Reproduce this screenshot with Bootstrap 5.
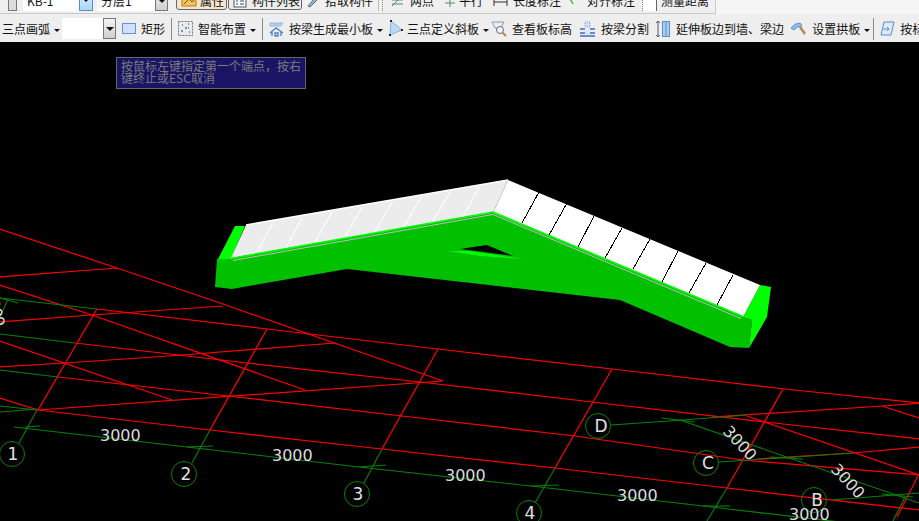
<!DOCTYPE html>
<html lang="en">
<head>
  <meta charset="UTF-8" />
  <meta name="viewport" content="width=device-width, initial-scale=1.0"/>
  <title>Slab Editor</title>
  <link href="https://cdn.jsdelivr.net/npm/bootstrap@5.3.0/dist/css/bootstrap.min.css" rel="stylesheet" />
  <style>
    html, body { height: 100%; overflow: hidden; background: #000; }
    body { font: 12px/1 "Noto Sans CJK SC", "Liberation Sans", sans-serif; color: #111; }
    .bar-wrap { background: #f5f5f5; }
    .bar-top { height: 14px; width: 716px; overflow: hidden; background: #f0f0f0; border-right: 1px solid #c8c8c8; border-bottom: 1px solid #c8c8c8; padding: 0 0 2px 8px; }
    .bar-main { height: 28px; background: #eee; white-space: nowrap; overflow: hidden; padding: 1px 0 0 2px; }
    .tool { margin-left: 7px; gap: 5px; flex: none; }
    .tool svg { flex: none; }
    .bar-top .tool { height: 18px; margin-bottom: 1px; }
    .m0 { margin-left: 0; }
    .m2 { margin-left: 2px; }
    .m5 { margin-left: 5px; }
    .m6 { margin-left: 6px; }
    .m9 { margin-left: 9px; }
    .m10 { margin-left: 10px; }
    .g2 { gap: 2px; }
    .g4 { gap: 4px; }
    .sep { width: 1px; height: 22px; background: #8a8a8a; margin-left: 6px; flex: none; }
    .sep-end { margin-left: 3px; }
    .edge-top { width: 1px; height: 20px; background: #bbb; margin-left: 5px; flex: none; }
    .sep-top { width: 1px; height: 20px; border-left: 1px dotted #888; margin-left: 3px; flex: none; }
    .sep-gap { margin-left: 7px; }
    .blank-top { width: 14px; height: 20px; background: #fff; border-right: 1px solid #666; flex: none; }
    .text-top { margin-left: 4px; height: 18px; margin-bottom: 1px; flex: none; }
    .combo-input { background: #fff; width: 41px; height: 21px; margin-left: 2px; flex: none; }
    .combo-btn { width: 13px; height: 21px; background: linear-gradient(#f4f4f4, #cfcfcf); border: 1px solid #777; flex: none; }
    .combo-btn::after, .combo-blue::after { content: ""; border-top: 4px solid #111; border-left: 4px solid transparent; border-right: 4px solid transparent; }
    .combo-blue { width: 14px; height: 22px; background: linear-gradient(#e0f0fc, #a8d8f8); border: 1px solid #5a8fb8; flex: none; }
    .top-input { background: #fff; height: 20px; padding-left: 4px; flex: none; }
    .top-name { width: 56px; margin-left: 6px; }
    .top-floor { width: 58px; margin-left: 4px; }
    .mini-btn { width: 9px; height: 20px; background: #ddd; border: 1px solid #777; flex: none; }
    .press { height: 18px; margin-bottom: 1px; border: 1px solid #666; border-radius: 3px; background: #ededed; padding: 0 2px 0 4px; gap: 3px; flex: none; }
    .press-on { margin-left: 8px; background: #f4e6cc; }
    .press-list { margin-left: 1px; gap: 5px; padding-right: 1px; }
    .dropdown-toggle::after { margin-left: 4px; vertical-align: 2px; }
    .stage { height: 479px; background: #000; }
    .stage svg { display: block; }
    .hint { top: 15px; left: 116px; width: 190px; height: 32px; background: #1a1464; border: 1px solid #666; color: #7c7c7c; padding: 2px 4px; line-height: 12px; }
    .dim { font: 16px "DejaVu Sans", sans-serif; fill: #dcdcdc; }
    .axis { font: 17px "DejaVu Sans", sans-serif; fill: #e0e0e0; text-anchor: middle; }
    .red polyline, .grn polyline, .grn line { fill: none; }
    .red { stroke: #f00; stroke-width: 1.25; }
    .grn { stroke: #0a800a; stroke-width: 1.1; }
    .bub { fill: none; stroke: #0a800a; }
  </style>
</head>
<body>

  <div class="bar-wrap">
    <div class="bar-top d-flex align-items-end">
      <div class="mini-btn"></div>
      <div class="top-input top-name d-flex align-items-center">KB-1</div><div class="combo-blue d-flex align-items-center justify-content-center"></div>
      <div class="top-input top-floor d-flex align-items-center">分层1</div><div class="combo-btn d-flex align-items-center justify-content-center"></div>
      <div class="press press-on d-flex align-items-center">
        <svg width="16" height="14" viewBox="0 0 16 14"><rect x="1" y="2" width="14" height="10" fill="#f6c25a" stroke="#b07a20"/><path d="M3 10 8 5l3 3 3-3" fill="none" stroke="#7a4a10"/></svg>属性
      </div>
      <div class="press press-list d-flex align-items-center">
        <svg width="14" height="14" viewBox="0 0 14 14"><rect x="1" y="1" width="12" height="12" fill="#fff" stroke="#456"/><path d="M3 4h2M7 4h4M3 7h2M7 7h4M3 10h2M7 10h4" stroke="#345"/></svg>构件列表
      </div>
      <div class="tool m5 g4 d-flex align-items-center">
        <svg width="14" height="14" viewBox="0 0 14 14"><path d="M1 12 8 4l2 2-7 7z" fill="#9db8e0" stroke="#567"/></svg>拾取构件
      </div>
      <div class="edge-top"></div>
      <div class="sep-top"></div>
      <div class="tool d-flex align-items-center">
        <svg width="15" height="14" viewBox="0 0 15 14"><path d="M2 12 12 2M2 6h11M2 10h11" stroke="#586" fill="none"/></svg>两点
      </div>
      <div class="tool m9 g2 d-flex align-items-center">
        <svg width="14" height="14" viewBox="0 0 14 14"><path d="M2 5h10M2 9h10M7 1v12" stroke="#586" fill="none"/></svg>平行
      </div>
      <div class="tool m10 d-flex align-items-center">
        <svg width="15" height="14" viewBox="0 0 15 14"><path d="M1 3v9M14 3v9M1 8h13" stroke="#333" fill="none"/></svg>长度标注
      </div>
      <div class="tool d-flex align-items-center">
        <svg width="14" height="14" viewBox="0 0 14 14"><path d="M1 3l4 7" stroke="#4a4" stroke-width="1.4" fill="none"/></svg>对齐标注
      </div>
      <div class="sep-top sep-gap"></div>
      <div class="blank-top"></div>
      <div class="text-top d-flex align-items-center">测量距离</div>
    </div>

    <div class="bar-main d-flex align-items-center">
      <div class="tool m0 d-flex align-items-center"><span class="dropdown-toggle">三点画弧</span></div>
      <div class="combo-input"></div>
      <div class="combo-btn d-flex align-items-center justify-content-center"></div>

      <div class="tool m6 d-flex align-items-center">
        <svg width="14" height="11" viewBox="0 0 14 11"><rect x=".5" y=".5" width="13" height="10" fill="#cfe0fa" stroke="#6f8fd0"/></svg>矩形
      </div>
      <div class="sep"></div>
      <div class="tool m6 d-flex align-items-center">
        <svg width="15" height="15" viewBox="0 0 15 15"><rect x=".5" y=".5" width="14" height="14" fill="#e6ebf2" stroke="#777" stroke-dasharray="2 1"/><path d="M4 4h1M10 3h1M7 7h2M3 10h2M11 11h1M10 7h1" stroke="#234"/></svg><span class="dropdown-toggle">智能布置</span>
      </div>
      <div class="sep"></div>
      <div class="tool m6 d-flex align-items-center">
        <svg width="15" height="16" viewBox="0 0 15 16"><path d="M1 2h7l-2 3H1zM9 2h5l-2 3H7z" fill="#bcd4f2" stroke="#9ab6de"/><path d="M1 12 7 7l7 5M3 11v4M12 11v4M6 15h3v-3H6z" fill="none" stroke="#4f83c9" stroke-width="1.4"/></svg><span class="dropdown-toggle">按梁生成最小板</span>
      </div>
      <div class="tool m6 g4 d-flex align-items-center">
        <svg width="14" height="17" viewBox="0 0 14 17"><path d="M2 1 13 10 1 15z" fill="#bcd8f4" stroke="#8cb4de"/><path d="M1 0h2v2H1zM12 9h2v2h-2zM0 14h2v2H0z" fill="#222"/></svg><span class="dropdown-toggle">三点定义斜板</span>
      </div>
      <div class="tool m2 d-flex align-items-center">
        <svg width="16" height="16" viewBox="0 0 16 16"><path d="M1 1h12l-3 6H4z" fill="#e8edf2" stroke="#8a9aaa"/><circle cx="9" cy="9" r="3.5" fill="#f4f8fc" stroke="#667"/><path d="M11.5 11.5 15 15" stroke="#b08a4a" stroke-width="2"/></svg>查看板标高
      </div>
      <div class="tool d-flex align-items-center">
        <svg width="17" height="16" viewBox="0 0 17 16"><rect x="6" y="1" width="5" height="5" fill="#cfe0f8" stroke="#7d9ed8" stroke-dasharray="1 1"/><path d="M1 8h5M11 8h5M1 12h5M11 12h5M1 15h15" stroke="#3f6cc0" stroke-width="1.3"/><rect x="6" y="9" width="5" height="5" fill="#dbe8fa"/></svg>按梁分割
      </div>
      <div class="tool d-flex align-items-center">
        <svg width="15" height="18" viewBox="0 0 15 18"><path d="M2 1v16M0 3l2-2 2 2M0 15l2 2 2-2" fill="none" stroke="#557"/><rect x="6.5" y="1.5" width="7" height="15" fill="#a9cdf2" stroke="#5d8fc8"/><path d="M10 2v14" stroke="#5d8fc8"/></svg>延伸板边到墙、梁边
      </div>
      <div class="tool d-flex align-items-center">
        <svg width="16" height="14" viewBox="0 0 16 14"><path d="M0 6Q4 1 9 1l2 3Q6 4 3 8z" fill="#8fc0ee" stroke="#5d8fc8"/><path d="M9 5l5 7" stroke="#b08a4a" stroke-width="2.4"/></svg><span class="dropdown-toggle">设置拱板</span>
      </div>
      <div class="sep sep-end"></div>
      <div class="tool m6 d-flex align-items-center">
        <svg width="15" height="15" viewBox="0 0 15 15"><path d="M4 1h10l-3 13H1z" fill="#dbe9fa" stroke="#5d8fc8"/><path d="M3 8h6l-2-2M9 8 7 10" fill="none" stroke="#5d8fc8"/></svg>按标高
      </div>
    </div>
  </div>

  <div class="stage position-relative overflow-hidden">
    <svg id="scene" width="919" height="479" viewBox="0 42 919 479">
      <g class="red">
        <polyline points="0,229 117,268 223,304 443,381 38,410"/>
        <polyline points="0,277 117,268"/>
        <polyline points="0,322 92,315 223,306"/>
        <polyline points="0,367 65,363 183,355 335,343"/>
        <polyline points="0,285 92,315 305,390"/>
        <polyline points="0,341 172,400"/>
        <polyline points="0,398 38,410"/>
        <polyline points="97,309 267,329 438,349 612,369 785,389 919,403"/>
        <polyline points="75,343 247,363 420,382 592,402 765,422 919,439"/>
        <polyline points="58,377 228,396 402,416 575,436 743,460 919,475"/>
        <polyline points="38,410 210,430 382,449 555,468 727,488 919,510"/>
        <polyline points="97,309 38,410"/>
        <polyline points="267,329 210,430"/>
        <polyline points="438,349 382,449"/>
        <polyline points="612,369 555,468"/>
        <polyline points="783,389 727,488"/>
        <polyline points="919,474 897,517"/>
        <polyline points="712,417 883,406 919,403"/>
        <polyline points="757,459 853,453 919,447"/>
        <polyline points="747,416 919,475"/>
        <polyline points="882,406 919,418"/>
      </g>
      <g class="grn">
        <polyline points="14,427 187,447 359,467 531,486 703,506 857,524"/>
        <line x1="25" y1="427" x2="40" y2="426"/>
        <line x1="187" y1="447" x2="213" y2="446"/>
        <line x1="359" y1="467" x2="386" y2="465"/>
        <line x1="531" y1="486" x2="559" y2="485"/>
        <line x1="703" y1="506" x2="730" y2="506"/>
        <line x1="19" y1="443" x2="37" y2="410"/>
        <line x1="192" y1="463" x2="210" y2="430"/>
        <line x1="364" y1="483" x2="382" y2="449"/>
        <line x1="535" y1="503" x2="555" y2="468"/>
        <line x1="707" y1="521" x2="727" y2="488"/>
        <line x1="893" y1="521" x2="905" y2="497"/>
        <line x1="0" y1="298" x2="97" y2="309"/>
        <line x1="0" y1="334" x2="75" y2="343"/>
        <line x1="0" y1="370" x2="58" y2="377"/>
        <line x1="0" y1="406" x2="37" y2="410"/>
        <line x1="0" y1="412" x2="37" y2="409"/>
        <line x1="8" y1="299" x2="0" y2="317"/>
        <line x1="0" y1="298" x2="18" y2="303"/>
        <polyline points="611,425 683,420 747,415"/>
        <line x1="662" y1="418" x2="695" y2="422"/>
        <line x1="680" y1="420" x2="919" y2="503"/>
        <polyline points="719,462 780,458 853,453"/>
        <line x1="770" y1="457" x2="803" y2="459"/>
        <line x1="882" y1="494" x2="913" y2="497"/>
        <line x1="832" y1="500" x2="919" y2="493"/>
      </g>

      <polygon fill="#00c000" points="217,259 215,287 232,289 243,287 347,269 480,284 620,300 730,347 749,348 752,320 743,317 493,213 231,258"/>
      <polygon fill="#000" points="460,249 487,245 513,256"/>
      <polygon fill="#00ff00" points="448,251 470,251 523,259 480,256"/>
      <polygon fill="#00ff00" points="218,259 235,226 245,226 231,259"/>
      <polygon fill="#00ff00" points="760,285 771,287 767,317 749,348 752,320 743,317"/>
      <polygon fill="#ececec" points="231,258 246,225 508,180 493,213"/>
      <polygon fill="#fff" points="508,180 760,285 743,317 493,213"/>
      <polyline points="246,225 508,180" fill="none" stroke="#fff" stroke-width="1.5"/>
      <polyline points="233,260.5 493,214.5 741,318.5" fill="none" stroke="#bdbdbd"/>
      <polyline points="231,258.5 493,212 743,316.5" fill="none" stroke="#0f0" stroke-width="1.6"/>
      <g stroke="#fff" shape-rendering="crispEdges">
        <line x1="273" y1="223" x2="257" y2="252"/>
        <line x1="302" y1="218" x2="286" y2="248"/>
        <line x1="332" y1="212" x2="315" y2="242"/>
        <line x1="362" y1="207" x2="345" y2="237"/>
        <line x1="392" y1="202" x2="375" y2="232"/>
        <line x1="421" y1="197" x2="404" y2="227"/>
        <line x1="450" y1="192" x2="433" y2="221"/>
        <line x1="479" y1="187" x2="463" y2="217"/>
      </g>
      <g stroke="#000" shape-rendering="crispEdges">
        <line x1="539" y1="192" x2="522" y2="223"/>
        <line x1="567" y1="203" x2="549" y2="235"/>
        <line x1="594" y1="216" x2="578" y2="247"/>
        <line x1="622" y1="228" x2="605" y2="258"/>
        <line x1="650" y1="239" x2="633" y2="269"/>
        <line x1="678" y1="251" x2="662" y2="282"/>
        <line x1="706" y1="263" x2="689" y2="293"/>
        <line x1="733" y1="275" x2="717" y2="305"/>
      </g>

      <circle class="bub" cx="12" cy="454" r="12.5"/>
      <circle class="bub" cx="184" cy="474" r="12.5"/>
      <circle class="bub" cx="357" cy="494" r="12.5"/>
      <circle class="bub" cx="529" cy="513" r="12.5"/>
      <circle class="bub" cx="598" cy="426" r="12.5"/>
      <circle class="bub" cx="706" cy="463" r="12.5"/>
      <circle class="bub" cx="814" cy="500" r="12.5"/>
      <text class="axis" x="13" y="460">1</text>
      <text class="axis" x="186" y="480">2</text>
      <text class="axis" x="358" y="500">3</text>
      <text class="axis" x="530" y="519">4</text>
      <text class="axis" x="601" y="432">D</text>
      <text class="axis" x="708" y="469">C</text>
      <text class="axis" x="817" y="506">B</text>

      <text class="dim" x="100" y="441">3000</text>
      <text class="dim" x="272" y="461">3000</text>
      <text class="dim" x="445" y="481">3000</text>
      <text class="dim" x="617" y="501">3000</text>
      <text class="dim" x="789" y="520">3000</text>
      <text class="dim" transform="translate(722,432) rotate(47)">3000</text>
      <text class="dim" transform="translate(830,470) rotate(47)">3000</text>
      <text class="dim" transform="translate(-15,293) rotate(75)" textLength="36">3000</text>
    </svg>
    <div class="hint position-absolute">按鼠标左键指定第一个端点，按右键终止或ESC取消</div>
  </div>

</body>
</html>
